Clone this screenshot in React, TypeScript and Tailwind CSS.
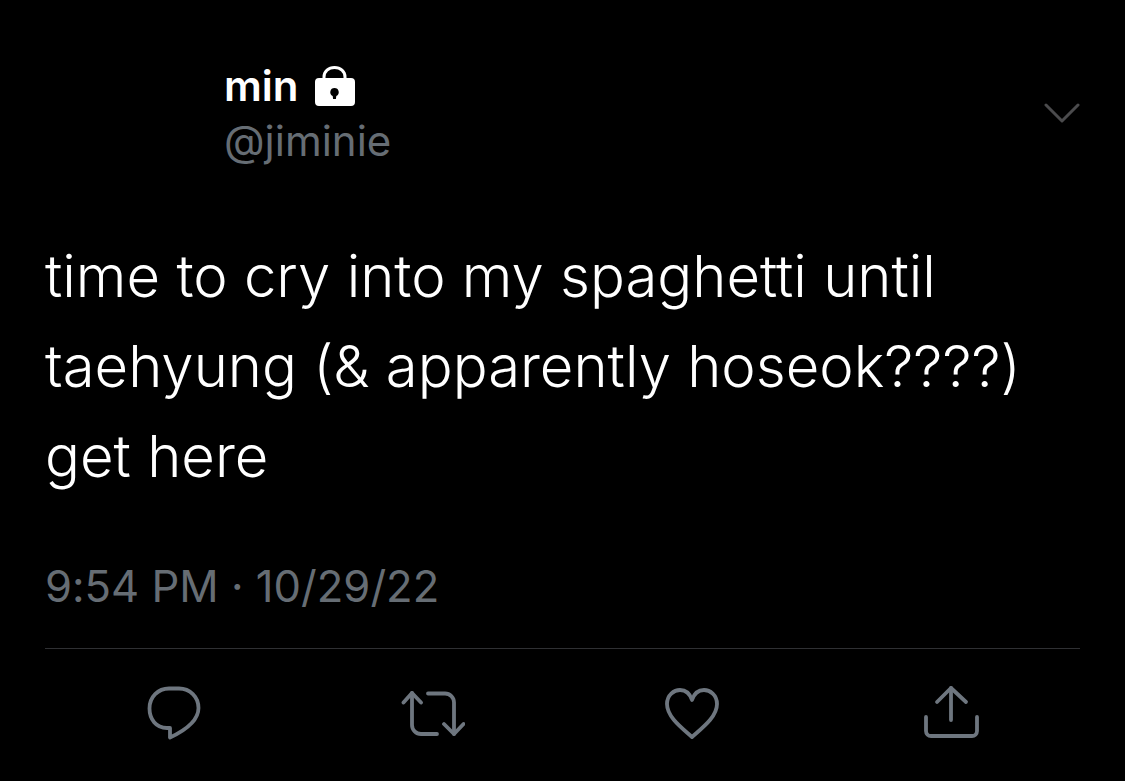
import React from 'react';

const LockIcon = () => (
  <svg width="42" height="41" viewBox="0 0 42 41" className="ml-[15px] shrink-0">
    <path d="M10 14V11C10 5.5 14.5 1.5 20.5 1.5S31 5.5 31 11V14" fill="none" stroke="#fff" strokeWidth="3" />
    <path
      fillRule="evenodd"
      fill="#fff"
      d="M5 12H37A4 4 0 0 1 41 16V36A4 4 0 0 1 37 40H5A4 4 0 0 1 1 36V16A4 4 0 0 1 5 12ZM20.5 22A4.2 4.2 0 0 0 18.7 30L19.1 33H21.9L22.3 30A4.2 4.2 0 0 0 20.5 22Z"
    />
  </svg>
);

const iconProps = {
  width: 64,
  height: 56,
  viewBox: '0 0 64 56',
  fill: 'none',
  stroke: '#6e767f',
  strokeWidth: 3.8,
  strokeLinecap: 'round' as const,
  strokeLinejoin: 'round' as const,
};

export default function App() {
  return (
    <div className="w-[1125px] h-[781px] overflow-hidden bg-black px-[45px] font-['Inter',sans-serif] [font-variant-ligatures:none]">
      {/* header */}
      <div className="flex justify-between pt-[60px] pl-[179px]">
        <div>
          <div className="flex items-center h-[52px]">
            <span className="text-[42px] leading-[52px] font-semibold text-white">min</span>
            <LockIcon />
          </div>
          <div className="pt-[3px] text-[42px] leading-[52px] text-[#666d74]">@jiminie</div>
        </div>
        <svg width="36" height="20" viewBox="0 0 36 20" className="mt-[43px]" fill="none" stroke="#4b4b4d" strokeWidth="3" strokeLinecap="round" strokeLinejoin="round">
          <path d="M2 2L18 18L34 2" />
        </svg>
      </div>

      {/* tweet body */}
      <div className="mt-[64px] text-[58px] leading-[90px] font-[350] text-white">
        <p>time to cry into my spaghetti until</p>
        <p>taehyung (&amp; apparently hoseok????)</p>
        <p>get here</p>
      </div>

      <div className="mt-[60px] text-[43.6px] leading-[52px] text-[#666d74]">9:54 PM · 10/29/22</div>

      <div className="mt-[35px] border-t border-[#2f3033]" />

      {/* actions */}
      <div className="grid grid-cols-4 pt-[35px]">
        <div className="flex justify-center">
          <svg {...iconProps}>
            <path d="M28 53.5V44H25C14 44 7.5 35 7.5 24.5C7.5 13 16 4.5 27 4.5H37C48 4.5 56.5 13 56.5 24C56.5 36 44 46 28 53.5Z" />
          </svg>
        </div>
        <div className="flex justify-center">
          <svg {...iconProps}>
            <path d="M11 9V41A9 9 0 0 0 20 50H36" />
            <path d="M2.5 18.5L11 9L20 18.5" />
            <path d="M27 9.5H44A9 9 0 0 1 53 18.5V50" />
            <path d="M43 40L53 50L62.5 40" />
          </svg>
        </div>
        <div className="flex justify-center">
          <svg {...iconProps}>
            <path d="M32 53C22 44 7 33 7 20C7 11 14 6 20 6C26 6 30 10 32 16C34 10 38 6 44 6C50 6 57 11 57 20C57 33 42 44 32 53Z" />
          </svg>
        </div>
        <div className="flex justify-center">
          <svg {...iconProps}>
            <path d="M32 36V4" />
            <path d="M18 18L32 4L47 18" />
            <path d="M7 33V47A5 5 0 0 0 12 52H53A5 5 0 0 0 58 47V33" />
          </svg>
        </div>
      </div>
    </div>
  );
}
